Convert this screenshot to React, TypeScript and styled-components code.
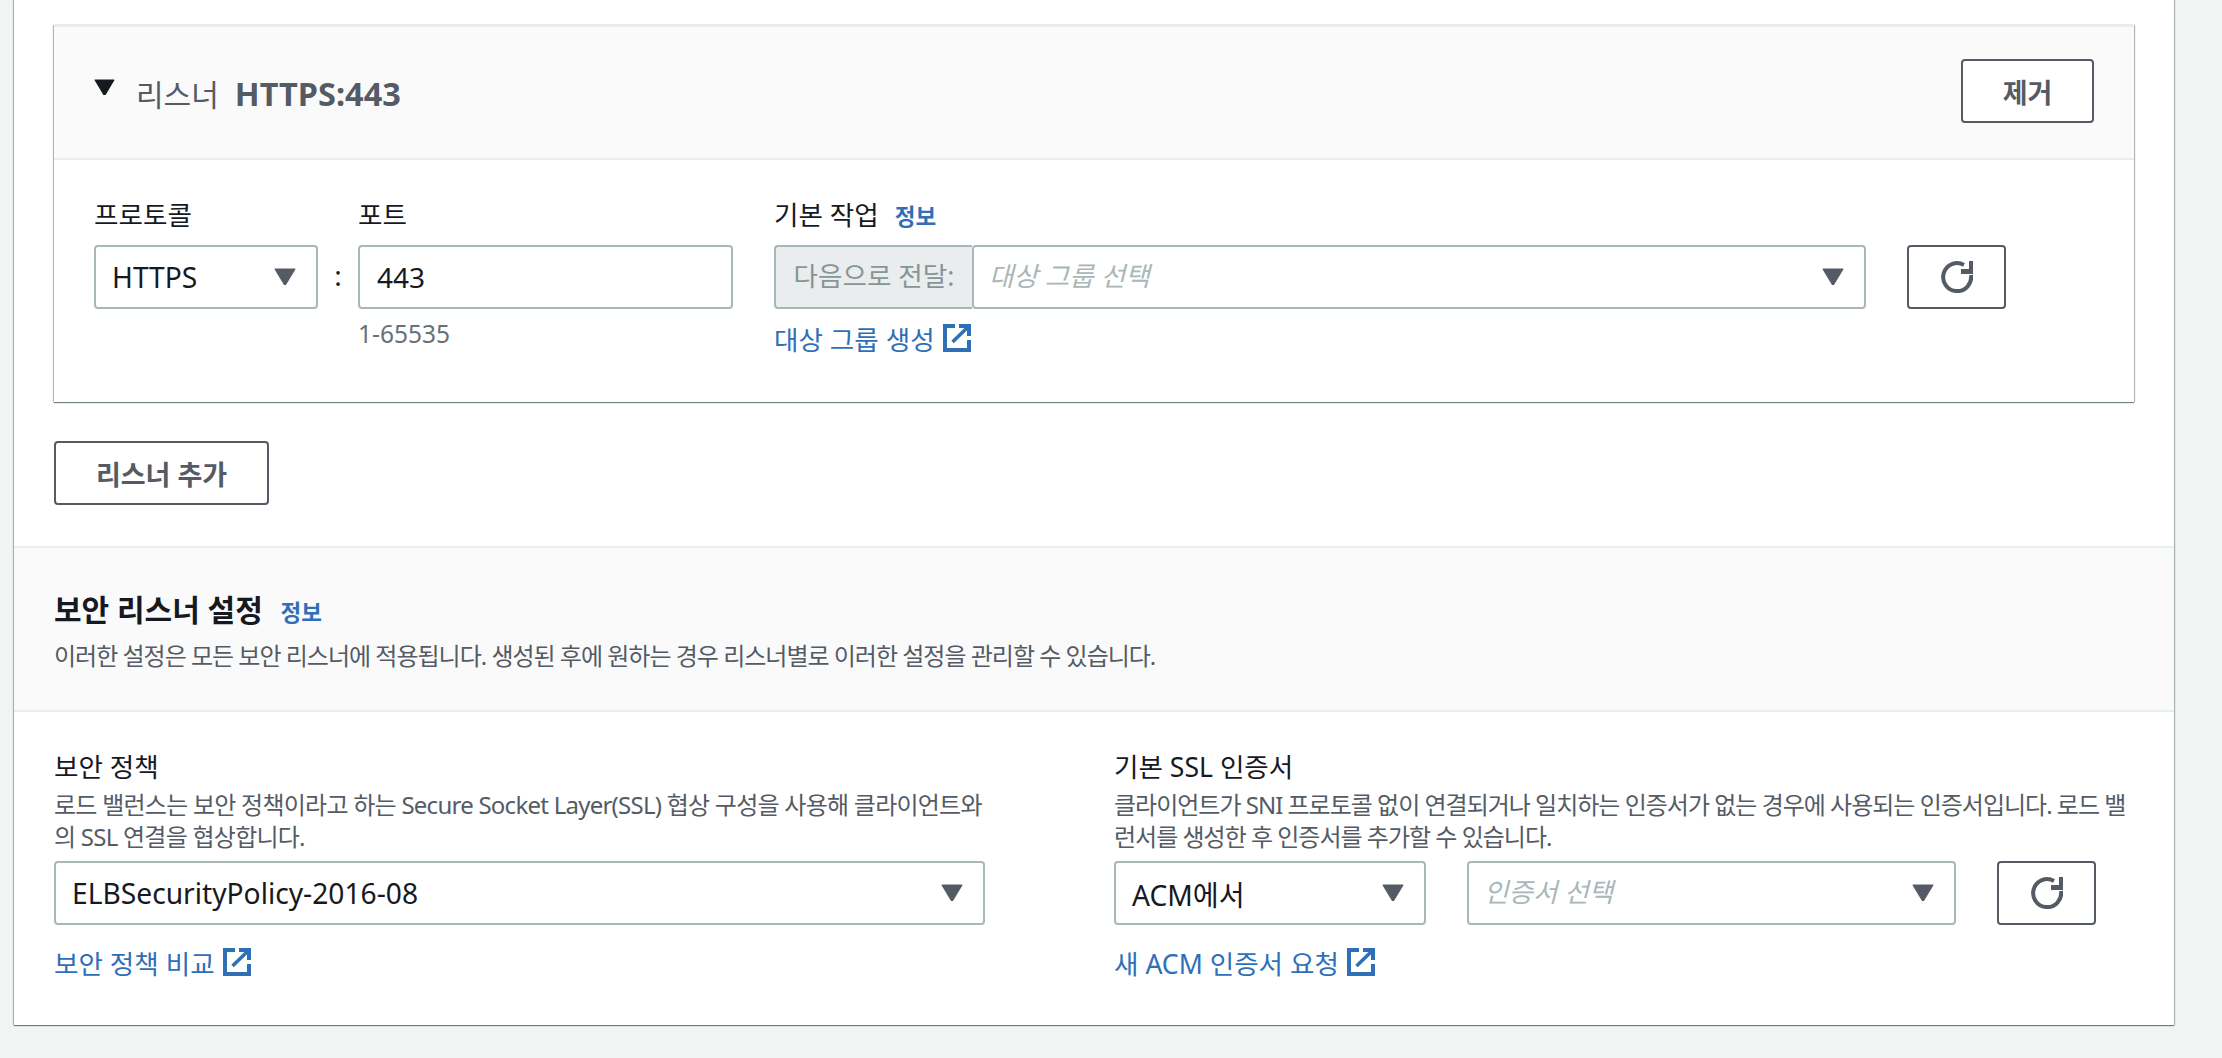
import React from 'react'
import styled, { createGlobalStyle } from 'styled-components'

const GlobalStyle = createGlobalStyle`
    html, body {
        margin: 0;
        padding: 0;
        background: #f2f3f3;
    }
    body {
        font-family: "Noto Sans", "Noto Sans CJK KR", sans-serif;
        color: #16191f;
    }
`

const CaretIcon = ({ color = '#545b64', size = 22 }: { color?: string; size?: number }) => (
    <svg width={size} height={size * 0.8} viewBox="0 0 20 16">
        <path d="M1 1h18L10.6 15h-1.2z" fill={color} stroke={color} strokeWidth="1" strokeLinejoin="round" />
    </svg>
)

const RefreshIcon = () => (
    <svg width="32" height="32" viewBox="0 0 32 32" fill="none">
        <path d="M30 14A14 14 0 1 1 23 3.9" stroke="#545b64" strokeWidth="4" />
        <path d="M32 0v13H20V8h8V0z" fill="#545b64" />
    </svg>
)

const ExternalIcon = () => (
    <svg width="28" height="28" viewBox="0 0 28 28" fill="none">
        <path d="M12 2H2v24h24V16" stroke="#2f6fb7" strokeWidth="4" />
        <path d="M16 2h10v10" stroke="#2f6fb7" strokeWidth="4" />
        <path d="M25 3L9.5 18" stroke="#2f6fb7" strokeWidth="3.5" />
    </svg>
)

function Select({ value, placeholder }: { value?: string; placeholder?: string }) {
    return (
        <SelectBox>
            {value ? <SelectValue>{value}</SelectValue> : <Placeholder>{placeholder}</Placeholder>}
            <CaretIcon />
        </SelectBox>
    )
}

function DocLink({ children }: { children: React.ReactNode }) {
    return (
        <LinkRow>
            {children}
            <ExternalIcon />
        </LinkRow>
    )
}

export default function App() {
    return (
        <>
            <GlobalStyle />
            <Page>
                <Panel>
                    <ListenerArea>
                        <Card>
                            <CardHeader>
                                <CardTitle>
                                    <Chevron>
                                        <CaretIcon color="#16191f" size={21} />
                                    </Chevron>
                                    <TitleLight>리스너</TitleLight>
                                    <TitleBold>HTTPS:443</TitleBold>
                                </CardTitle>
                                <Button $width={133}>제거</Button>
                            </CardHeader>
                            <CardBody>
                                <ProtocolField>
                                    <Label>프로토콜</Label>
                                    <Select value="HTTPS" />
                                </ProtocolField>
                                <Colon>:</Colon>
                                <PortField>
                                    <Label>포트</Label>
                                    <InputBox>443</InputBox>
                                    <Hint>1-65535</Hint>
                                </PortField>
                                <ActionField>
                                    <Label>
                                        기본 작업 <InfoLink>정보</InfoLink>
                                    </Label>
                                    <ActionRow>
                                        <Combo>
                                            <ComboPrefix>다음으로 전달:</ComboPrefix>
                                            <Select placeholder="대상 그룹 선택" />
                                        </Combo>
                                        <RefreshButton>
                                            <RefreshIcon />
                                        </RefreshButton>
                                    </ActionRow>
                                    <CreateLink>
                                        <DocLink>대상 그룹 생성</DocLink>
                                    </CreateLink>
                                </ActionField>
                            </CardBody>
                        </Card>
                        <AddRow>
                            <Button $width={215}>리스너 추가</Button>
                        </AddRow>
                    </ListenerArea>

                    <SectionHead>
                        <SectionTitle>
                            보안 리스너 설정 <SectionInfo>정보</SectionInfo>
                        </SectionTitle>
                        <SectionDesc>
                            이러한 설정은 모든 보안 리스너에 적용됩니다. 생성된 후에 원하는 경우 리스너별로 이러한 설정을 관리할 수 있습니다.
                        </SectionDesc>
                    </SectionHead>

                    <SettingsGrid>
                        <div>
                            <Label>보안 정책</Label>
                            <Description $spacing={-0.75}>
                                로드 밸런스는 보안 정책이라고 하는 Secure Socket Layer(SSL) 협상 구성을 사용해 클라이언트와의 SSL 연결을 협상합니다.
                            </Description>
                            <Select value="ELBSecurityPolicy-2016-08" />
                            <DocLink>보안 정책 비교</DocLink>
                        </div>
                        <div>
                            <Label>기본 SSL 인증서</Label>
                            <Description $spacing={-1}>
                                클라이언트가 SNI 프로토콜 없이 연결되거나 일치하는 인증서가 없는 경우에 사용되는 인증서입니다. 로드 밸런서를 생성한 후 인증서를 추가할 수 있습니다.
                            </Description>
                            <CertRow>
                                <Select value="ACM에서" />
                                <Select placeholder="인증서 선택" />
                                <RefreshButton>
                                    <RefreshIcon />
                                </RefreshButton>
                            </CertRow>
                            <DocLink>새 ACM 인증서 요청</DocLink>
                        </div>
                    </SettingsGrid>
                </Panel>
            </Page>
        </>
    )
}

const Page = styled.div`
    height: 1058px;
    box-sizing: border-box;
    padding: 0 48px 33px 14px;
    overflow: hidden;
`

const Panel = styled.div`
    background: #fff;
    height: 1025px;
    box-shadow: 0 1px 1px 0 rgba(0, 28, 36, 0.5), 1px 0 1px 0 rgba(0, 28, 36, 0.25), -1px 0 1px 0 rgba(0, 28, 36, 0.25);
`

const ListenerArea = styled.div`
    padding: 25px 40px 41px 40px;
`

const Card = styled.div`
    border-top: 2px solid #eaeded;
    height: 377px;
    box-sizing: border-box;
    box-shadow: 0 1px 1px 0 rgba(0, 28, 36, 0.5), 1px 0 1px 0 rgba(0, 28, 36, 0.25), -1px 0 1px 0 rgba(0, 28, 36, 0.25);
`

const CardHeader = styled.div`
    height: 133px;
    box-sizing: border-box;
    background: #fafafa;
    border-bottom: 2px solid #eaeded;
    padding: 0 40px 3px 40px;
    display: flex;
    align-items: center;
    justify-content: space-between;
`

const CardTitle = styled.div`
    display: flex;
    align-items: center;
    margin-top: 4px;
`

const Chevron = styled.span`
    display: flex;
    margin: -12px 21px 0 0;
`

const TitleLight = styled.span`
    font-size: 30px;
    color: #545b64;
    margin-right: 16px;
`

const TitleBold = styled.span`
    font-size: 32.5px;
    font-weight: 700;
    color: #545b64;
`

const Button = styled.button<{ $width: number }>`
    width: ${p => p.$width}px;
    height: 64px;
    background: #fff;
    border: 2px solid #545b64;
    border-radius: 4px;
    color: #545b64;
    font-family: inherit;
    font-size: 27px;
    font-weight: 700;
    padding: 0;
`

const CardBody = styled.div`
    display: flex;
    padding: 33px 0 0 40px;
`

const Label = styled.div`
    height: 40px;
    font-size: 26.6px;
    line-height: 40px;
    color: #16191f;
    padding-top: 2px;
    margin-bottom: 10px;
`

const ProtocolField = styled.div`
    width: 224px;
`

const Colon = styled.div`
    width: 40px;
    padding-top: 50px;
    font-size: 28px;
    line-height: 64px;
    text-align: center;
`

const PortField = styled.div`
    width: 375px;
    margin-right: 41px;
`

const ActionField = styled.div`
    flex: 1;
`

const InfoLink = styled.span`
    font-size: 22.5px;
    font-weight: 700;
    color: #2f6fb7;
    margin-left: 9px;
`

const SelectBox = styled.div`
    flex: 1;
    height: 64px;
    box-sizing: border-box;
    background: #fff;
    border: 2px solid #aab7b8;
    border-radius: 4px;
    padding: 0 20px 0 16px;
    display: flex;
    align-items: center;
    justify-content: space-between;
`

const SelectValue = styled.span`
    font-size: 28.2px;
    color: #16191f;
`

const Placeholder = styled.span`
    font-size: 26.6px;
    line-height: 32px;
    margin: -2px 0 0 -1px;
    font-style: italic;
    color: #aab7b8;
`

const InputBox = styled.div`
    height: 64px;
    box-sizing: border-box;
    border: 2px solid #aab7b8;
    border-radius: 4px;
    padding: 0 17px;
    font-size: 28px;
    line-height: 60px;
    color: #16191f;
`

const Hint = styled.div`
    font-size: 24.5px;
    line-height: 34px;
    margin-top: 8px;
    color: #687078;
`

const ActionRow = styled.div`
    display: flex;
    align-items: center;
    gap: 41px;
`

const Combo = styled.div`
    width: 1092px;
    display: flex;
`

const ComboPrefix = styled.div`
    width: 198px;
    height: 64px;
    box-sizing: border-box;
    background: #eaeded;
    border: 2px solid #aab7b8;
    border-right: none;
    border-radius: 4px 0 0 4px;
    color: #879596;
    font-size: 26.6px;
    line-height: 58px;
    text-align: center;
`

const RefreshButton = styled.button`
    width: 99px;
    height: 64px;
    flex: none;
    background: #fff;
    border: 2px solid #545b64;
    border-radius: 4px;
    padding: 0;
    display: flex;
    align-items: center;
    justify-content: center;
`

const LinkRow = styled.div`
    display: flex;
    align-items: center;
    gap: 8px;
    margin-top: 17px;
    height: 40px;
    font-size: 26.6px;
    color: #2f6fb7;
`

const CreateLink = styled.div`
    margin-top: -8px;
`

const AddRow = styled.div`
    margin-top: 39px;
`

const SectionHead = styled.div`
    height: 166px;
    box-sizing: border-box;
    background: #fafafa;
    border-top: 2px solid #eaeded;
    border-bottom: 2px solid #eaeded;
    padding: 40px 40px 0 40px;
`

const SectionTitle = styled.div`
    font-size: 30px;
    font-weight: 700;
    line-height: 44px;
    color: #16191f;
`

const SectionInfo = styled.span`
    font-size: 22.5px;
    font-weight: 700;
    color: #2f6fb7;
    margin-left: 10px;
`

const SectionDesc = styled.div`
    font-size: 24px;
    line-height: 36px;
    margin-top: 3px;
    letter-spacing: -1px;
    color: #545b64;
`

const SettingsGrid = styled.div`
    display: grid;
    grid-template-columns: 931px 1020px;
    column-gap: 129px;
    padding: 33px 0 0 40px;
`

const Description = styled.div<{ $spacing: number }>`
    font-size: 24px;
    line-height: 32px;
    letter-spacing: ${p => p.$spacing}px;
    word-break: break-all;
    margin: -8px 0 8px;
    color: #545b64;
`

const CertRow = styled.div`
    display: grid;
    grid-template-columns: 312px 489px 99px;
    column-gap: 41px;
`
